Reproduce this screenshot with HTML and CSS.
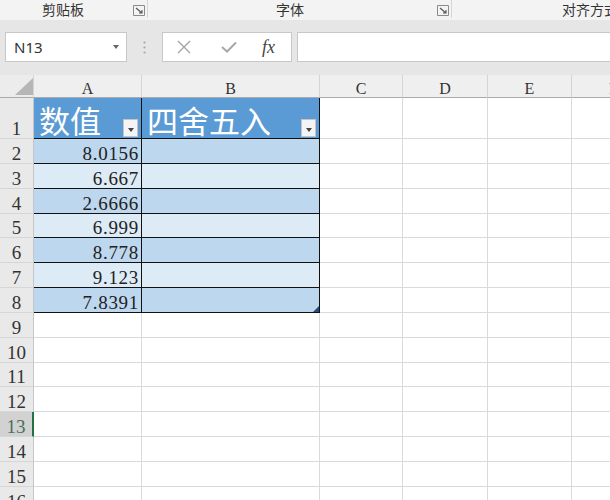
FILE: index.html
```html
<!DOCTYPE html>
<html lang="zh-CN">
<head>
  <meta charset="UTF-8">
  <title>四舍五入</title>
  <link rel="stylesheet" href="styles.css">
</head>
<body>
  <div class="ribbon">
    <div class="group group-clip">
      <span class="group-label">剪贴板</span>
      <svg class="launcher" width="12" height="11" viewBox="0 0 12 11"><path d="M0.5 10.5V0.5H11.5V10.5H0.5" fill="none" stroke="#8a8a8a"/><path d="M3 3L9 8M9 5V8H6" fill="none" stroke="#555" stroke-width="1.1"/></svg>
    </div>
    <div class="group group-font">
      <span class="group-label">字体</span>
      <svg class="launcher" width="12" height="11" viewBox="0 0 12 11"><path d="M0.5 10.5V0.5H11.5V10.5H0.5" fill="none" stroke="#8a8a8a"/><path d="M3 3L9 8M9 5V8H6" fill="none" stroke="#555" stroke-width="1.1"/></svg>
    </div>
    <div class="group group-align">
      <span class="group-label">对齐方式</span>
    </div>
  </div>

  <div class="formula-bar">
    <div class="name-box">
      <span>N13</span>
      <span class="caret"></span>
    </div>
    <div class="grip">
      <svg width="3" height="13" viewBox="0 0 3 13"><circle cx="1.5" cy="1.5" r="1.1" fill="#a5a5a5"/><circle cx="1.5" cy="6.5" r="1.1" fill="#a5a5a5"/><circle cx="1.5" cy="11.5" r="1.1" fill="#a5a5a5"/></svg>
    </div>
    <div class="fx-buttons">
      <svg class="btn-cancel" width="14" height="14" viewBox="0 0 14 14"><path d="M1 1L13 13M13 1L1 13" stroke="#a3a3a3" stroke-width="1.3"/></svg>
      <svg class="btn-enter" width="16" height="12" viewBox="0 0 16 12"><path d="M1 6L6 10.5L15 1.5" fill="none" stroke="#a8a8a8" stroke-width="2"/></svg>
      <span class="btn-fx">fx</span>
    </div>
    <div class="formula-input"></div>
  </div>

  <div class="sheet">
    <div class="row row-head">
      <div class="corner"><svg width="18" height="17" viewBox="0 0 18 17"><polygon points="18,0 18,17 0,17" fill="#b6b6b6"/></svg></div>
      <div class="ch">A</div>
      <div class="ch">B</div>
      <div class="ch">C</div>
      <div class="ch">D</div>
      <div class="ch">E</div>
      <div class="ch">F</div>
    </div>

    <div class="row row-top">
      <div class="rh">1</div>
      <div class="c t th">数值<span class="filter"></span></div>
      <div class="c t th">四舍五入<span class="filter"></span></div>
      <div class="c"></div><div class="c"></div><div class="c"></div><div class="c"></div>
    </div>
    <div class="row">
      <div class="rh">2</div>
      <div class="c t dk num">8.0156</div>
      <div class="c t dk"></div>
      <div class="c"></div><div class="c"></div><div class="c"></div><div class="c"></div>
    </div>
    <div class="row">
      <div class="rh">3</div>
      <div class="c t lt num">6.667</div>
      <div class="c t lt"></div>
      <div class="c"></div><div class="c"></div><div class="c"></div><div class="c"></div>
    </div>
    <div class="row">
      <div class="rh">4</div>
      <div class="c t dk num">2.6666</div>
      <div class="c t dk"></div>
      <div class="c"></div><div class="c"></div><div class="c"></div><div class="c"></div>
    </div>
    <div class="row">
      <div class="rh">5</div>
      <div class="c t lt num">6.999</div>
      <div class="c t lt"></div>
      <div class="c"></div><div class="c"></div><div class="c"></div><div class="c"></div>
    </div>
    <div class="row">
      <div class="rh">6</div>
      <div class="c t dk num">8.778</div>
      <div class="c t dk"></div>
      <div class="c"></div><div class="c"></div><div class="c"></div><div class="c"></div>
    </div>
    <div class="row">
      <div class="rh">7</div>
      <div class="c t lt num">9.123</div>
      <div class="c t lt"></div>
      <div class="c"></div><div class="c"></div><div class="c"></div><div class="c"></div>
    </div>
    <div class="row">
      <div class="rh">8</div>
      <div class="c t dk num">7.8391</div>
      <div class="c t dk"><span class="resize"></span></div>
      <div class="c"></div><div class="c"></div><div class="c"></div><div class="c"></div>
    </div>
    <div class="row">
      <div class="rh">9</div>
      <div class="c"></div><div class="c"></div><div class="c"></div><div class="c"></div><div class="c"></div><div class="c"></div>
    </div>
    <div class="row">
      <div class="rh">10</div>
      <div class="c"></div><div class="c"></div><div class="c"></div><div class="c"></div><div class="c"></div><div class="c"></div>
    </div>
    <div class="row">
      <div class="rh">11</div>
      <div class="c"></div><div class="c"></div><div class="c"></div><div class="c"></div><div class="c"></div><div class="c"></div>
    </div>
    <div class="row">
      <div class="rh">12</div>
      <div class="c"></div><div class="c"></div><div class="c"></div><div class="c"></div><div class="c"></div><div class="c"></div>
    </div>
    <div class="row">
      <div class="rh active">13</div>
      <div class="c"></div><div class="c"></div><div class="c"></div><div class="c"></div><div class="c"></div><div class="c"></div>
    </div>
    <div class="row">
      <div class="rh">14</div>
      <div class="c"></div><div class="c"></div><div class="c"></div><div class="c"></div><div class="c"></div><div class="c"></div>
    </div>
    <div class="row">
      <div class="rh">15</div>
      <div class="c"></div><div class="c"></div><div class="c"></div><div class="c"></div><div class="c"></div><div class="c"></div>
    </div>
    <div class="row">
      <div class="rh">16</div>
      <div class="c"></div><div class="c"></div><div class="c"></div><div class="c"></div><div class="c"></div><div class="c"></div>
    </div>
  </div>
</body>
</html>
```

FILE: styles.css
```css
* { box-sizing: border-box; }
body {
  margin: 0;
  width: 610px;
  height: 500px;
  overflow: hidden;
  background: #fff;
  color: #222;
  font-family: 'Liberation Serif', 'Noto Sans CJK SC', serif;
}

/* ribbon group captions */
.ribbon {
  display: flex;
  height: 20px;
  background: #f3f3f3;
  font-family: 'Noto Sans CJK SC', sans-serif;
  font-size: 14px;
  color: #333;
}
.group {
  display: flex;
  align-items: center;
  height: 18px;
  border-right: 1px solid #d6d6d6;
  white-space: nowrap;
}
.group-clip { width: 148px; padding-left: 42px; }
.group-font { width: 304px; padding-left: 128px; }
.group-align { flex: 1; padding-left: 110px; border-right: none; overflow: hidden; }
.group-label { line-height: 18px; }
.launcher { margin-left: auto; margin-right: 2px; margin-top: 3px; }

/* formula bar */
.formula-bar {
  display: flex;
  align-items: center;
  height: 55px;
  padding: 12px 0 13px 5px;
  background: #e6e6e6;
}
.name-box {
  display: flex;
  align-items: center;
  justify-content: space-between;
  width: 122px;
  height: 30px;
  padding: 0 7px 0 8px;
  background: #fff;
  border: 1px solid #c8c8c8;
  font-family: 'Noto Sans', sans-serif;
  font-size: 15px;
  color: #333;
}
.caret {
  width: 0;
  height: 0;
  border-left: 3.5px solid transparent;
  border-right: 3.5px solid transparent;
  border-top: 4px solid #666;
}
.grip {
  display: flex;
  justify-content: center;
  width: 35px;
}
.fx-buttons {
  display: flex;
  align-items: center;
  width: 130px;
  height: 30px;
  background: #fff;
  border: 1px solid #c8c8c8;
}
.btn-cancel { margin-left: 14px; }
.btn-enter { margin-left: 30px; }
.btn-fx {
  margin-left: 25px;
  font-family: 'Liberation Serif', serif;
  font-style: italic;
  font-size: 18px;
  color: #444;
}
.formula-input {
  flex: 1;
  height: 30px;
  margin-left: 5px;
  background: #fff;
  border: 1px solid #c8c8c8;
  border-right: none;
}

/* worksheet grid */
.sheet {
  width: 610px;
  overflow: hidden;
}
.row {
  display: grid;
  grid-template-columns: 34px 108px 178px 83px 85px 84px 84px;
  height: 24.85px;
  width: 656px;
}
.row-head { height: 23px; }
.row-top { height: 41px; }

.corner, .ch {
  background: #efefef;
  border-right: 1px solid #d4d4d4;
  border-bottom: 1px solid #ababab;
}
.corner {
  display: flex;
  justify-content: flex-end;
  align-items: flex-end;
  padding-bottom: 2px;
  background: #ececec;
}
.ch {
  display: flex;
  justify-content: center;
  align-items: flex-end;
  font-size: 16px;
  line-height: 16px;
  color: #333;
}

.rh {
  display: flex;
  justify-content: center;
  align-items: flex-end;
  background: #e9e9e9;
  border-right: 1px solid #c6c6c6;
  border-bottom: 1px solid #d6d6d6;
  font-size: 19px;
  line-height: 19px;
  color: #333;
}
.rh.active {
  background: #d2d2d2;
  color: #46705a;
  border-right: 2px solid #217346;
}

.c {
  position: relative;
  display: flex;
  align-items: flex-end;
  border-right: 1px solid #dadada;
  border-bottom: 1px solid #dadada;
}
.t {
  border-right-color: #111;
  border-bottom-color: #111;
}
.th {
  padding: 0 0 3px 5px;
  background: #5b9bd5;
  color: #fff;
  font-family: 'Noto Sans CJK SC', sans-serif;
  font-size: 31px;
  line-height: 31px;
  white-space: nowrap;
}
.dk { background: #bdd7ee; }
.lt { background: #ddebf7; }
.num {
  justify-content: flex-end;
  padding-right: 2px;
  font-size: 19px;
  line-height: 19px;
  letter-spacing: 0.7px;
}

.filter {
  position: absolute;
  right: 3px;
  bottom: 1px;
  width: 15px;
  height: 18px;
  background: #f4f4f4;
  border: 1px solid #c4c4c4;
}
.filter::after {
  content: '';
  position: absolute;
  left: 3.5px;
  top: 8px;
  border-left: 3.5px solid transparent;
  border-right: 3.5px solid transparent;
  border-top: 4px solid #444;
}
.resize {
  position: absolute;
  right: 0;
  bottom: 0;
  width: 6px;
  height: 6px;
  background: #2b4a7e;
  clip-path: polygon(100% 0, 100% 100%, 0 100%);
}
```
